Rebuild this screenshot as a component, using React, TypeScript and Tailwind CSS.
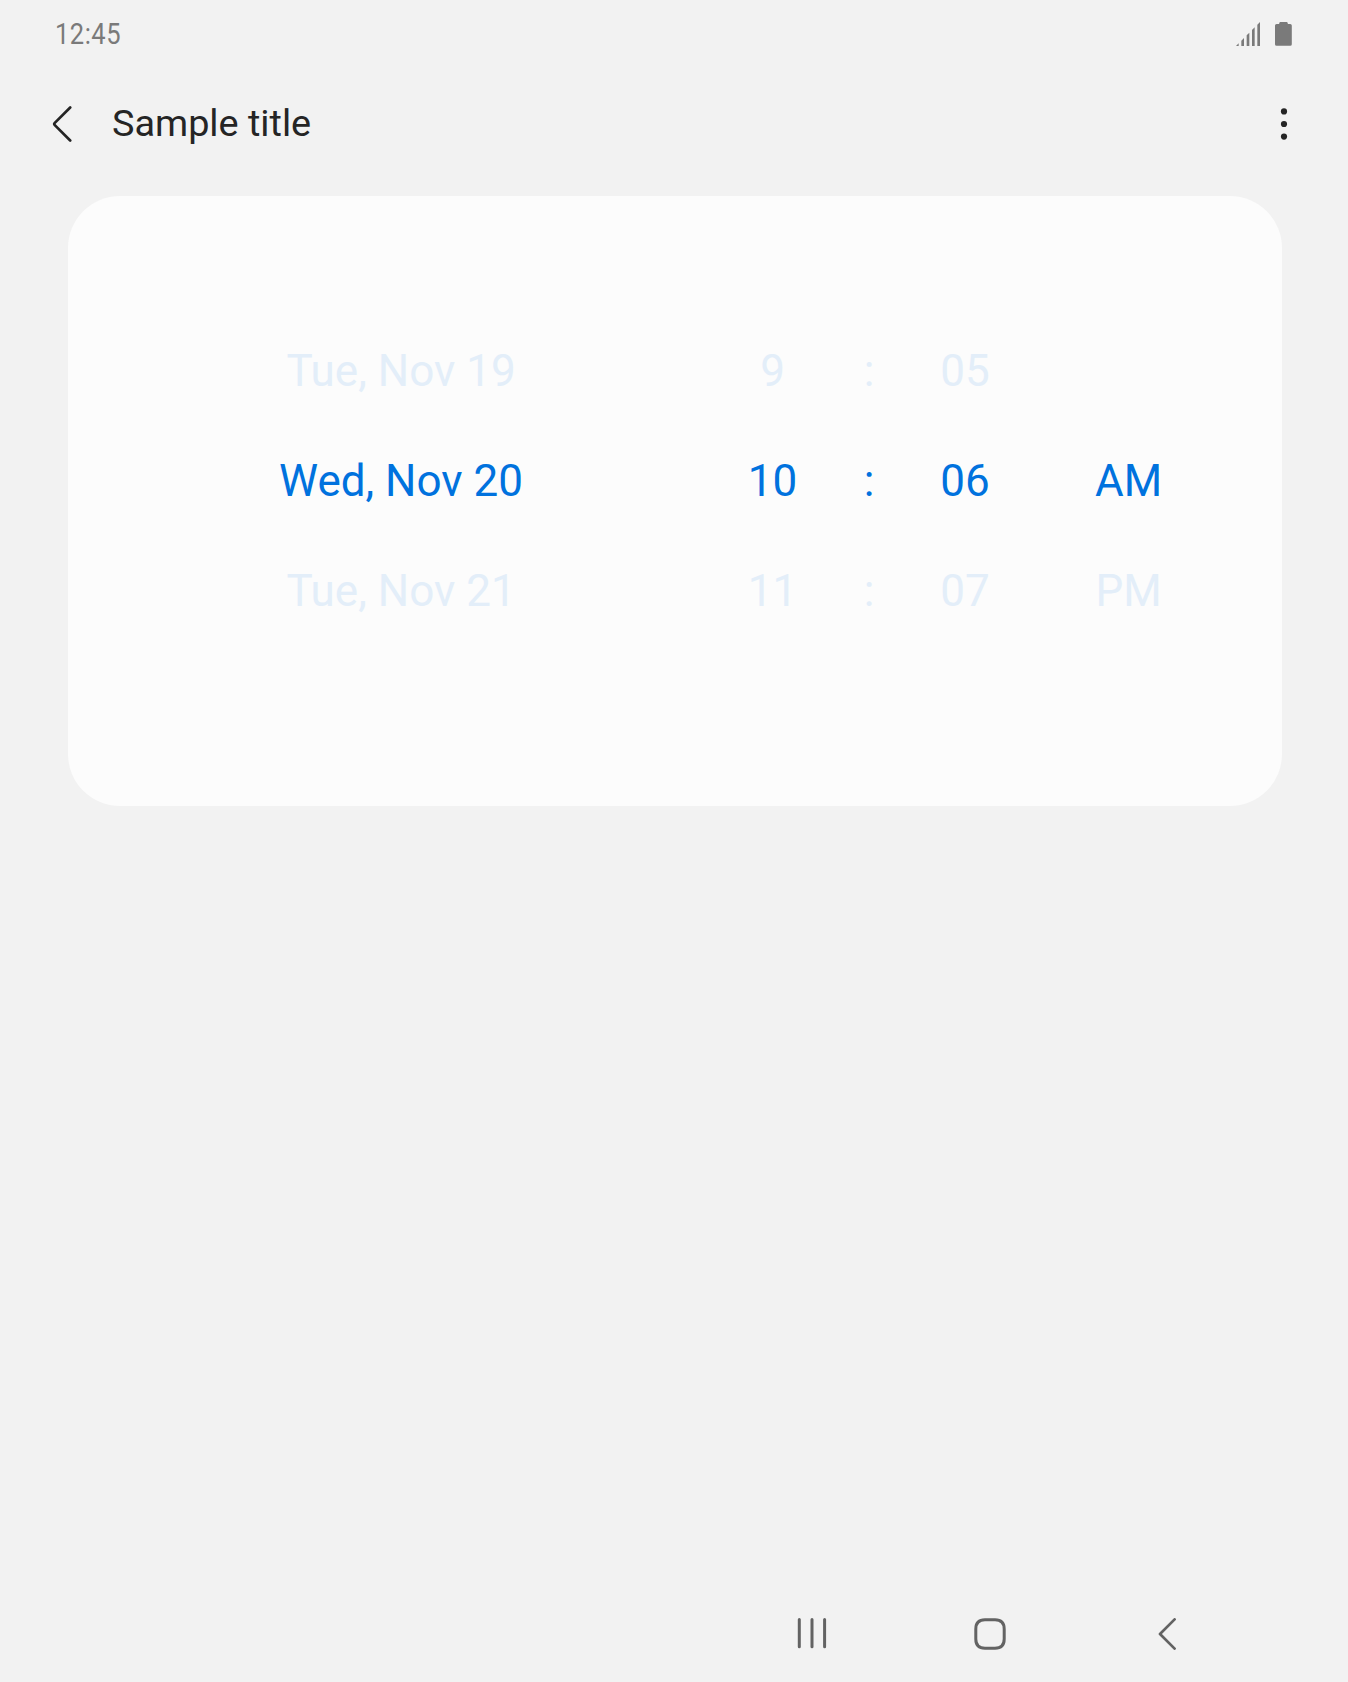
const columns = [
  { name: "date", width: "w-[638px]", values: ["Tue, Nov 19", "Wed, Nov 20", "Tue, Nov 21"] },
  { name: "hour", width: "w-[105px]", values: ["9", "10", "11"] },
  { name: "separator", width: "w-[88px]", values: [":", ":", ":"] },
  { name: "minute", width: "w-[104px]", values: ["05", "06", "07"] },
  { name: "period", width: "w-[223px]", values: ["", "AM", "PM"] },
];

function StatusBar() {
  return (
    <header className="flex h-[68px] items-center justify-between pr-[56px] pl-[55px] text-[#7a7a7a]">
      <span className="origin-left scale-x-[0.85] text-[30px] leading-[68px] tracking-[0.6px]">12:45</span>
      <div className="flex items-center gap-[15px]">
        <svg width="24" height="24" viewBox="0 0 24 24" fill="currentColor">
          <path d="M0 24L2.67 21.3V24ZM5.33 24V18.7L8 16V24ZM10.67 24V13.3L13.33 10.7V24ZM16 24V8L18.67 5.3V24ZM21.33 24V2.7L24 0V24Z" />
        </svg>
        <svg width="17" height="24" viewBox="0 0 17 24" fill="currentColor">
          <path d="M5.3 0H11.7Q12.4 0 12.6 .8L12.9 2H15.2Q16.8 2 16.8 3.6V22.2Q16.8 23.8 15.2 23.8H1.6Q0 23.8 0 22.2V3.6Q0 2 1.6 2H4.1L4.4 .8Q4.6 0 5.3 0Z" />
        </svg>
      </div>
    </header>
  );
}

function AppBar() {
  return (
    <div className="flex h-[112px] items-center pr-[60px] pl-[52px] text-[#252525]">
      <button aria-label="Back">
        <svg width="20" height="36" viewBox="0 0 20 36" fill="none" stroke="currentColor" strokeWidth="2.7" strokeLinecap="round">
          <path d="M18.2 1.5L2.8 16.9Q1.7 18 2.8 19.1L18.2 34.5" />
        </svg>
      </button>
      <h1 className="mb-[2px] ml-[40px] text-[37.8px] leading-[44px]">Sample title</h1>
      <button aria-label="More options" className="ml-auto">
        <svg width="8" height="32" viewBox="0 0 8 32" fill="currentColor">
          <circle cx="4" cy="3.4" r="3.1" />
          <circle cx="4" cy="16" r="3.1" />
          <circle cx="4" cy="28.6" r="3.1" />
        </svg>
      </button>
    </div>
  );
}

function DateTimePicker() {
  return (
    <main className="mt-[16px] mr-[66px] ml-[68px] flex h-[610px] rounded-[52px] bg-[#fcfcfc] pt-[120px] pl-[14px]">
      {columns.map((column) => (
        <div key={column.name} className={`flex flex-col text-center text-[44px] leading-[110px] ${column.width}`}>
          {column.values.map((value, index) => (
            <span key={index} className={`h-[110px] ${index === 1 ? "text-[#0072de]" : "text-[#e3eef9]"}`}>
              {value}
            </span>
          ))}
        </div>
      ))}
    </main>
  );
}

function NavigationBar() {
  return (
    <nav className="mt-auto flex h-[96px] items-center justify-end pr-[172px] text-[#636363]">
      <button aria-label="Recent apps" className="mr-[147px]">
        <svg width="30" height="32" viewBox="0 0 30 32" fill="none" stroke="currentColor" strokeWidth="3" strokeLinecap="round">
          <path d="M2.3 1.5V28.7M15 1.5V28.7M27.6 1.5V28.7" />
        </svg>
      </button>
      <button aria-label="Home" className="mr-[152px]">
        <svg width="32" height="32" viewBox="0 0 32 32" fill="none" stroke="currentColor" strokeWidth="3">
          <path d="M11 1.8H21Q30.2 1.8 30.2 11V21Q30.2 30.2 21 30.2H11Q1.8 30.2 1.8 21V11Q1.8 1.8 11 1.8Z" />
        </svg>
      </button>
      <button aria-label="Back">
        <svg width="18" height="32" viewBox="0 0 18 32" fill="none" stroke="currentColor" strokeWidth="2.7" strokeLinecap="round" strokeLinejoin="round">
          <path d="M16.6 1.4L2 16L16.6 30.6" />
        </svg>
      </button>
    </nav>
  );
}

export default function App() {
  return (
    <div className="flex h-[1682px] w-[1348px] flex-col overflow-hidden bg-[#f2f2f2] font-['Roboto',sans-serif]">
      <StatusBar />
      <AppBar />
      <DateTimePicker />
      <NavigationBar />
    </div>
  );
}
